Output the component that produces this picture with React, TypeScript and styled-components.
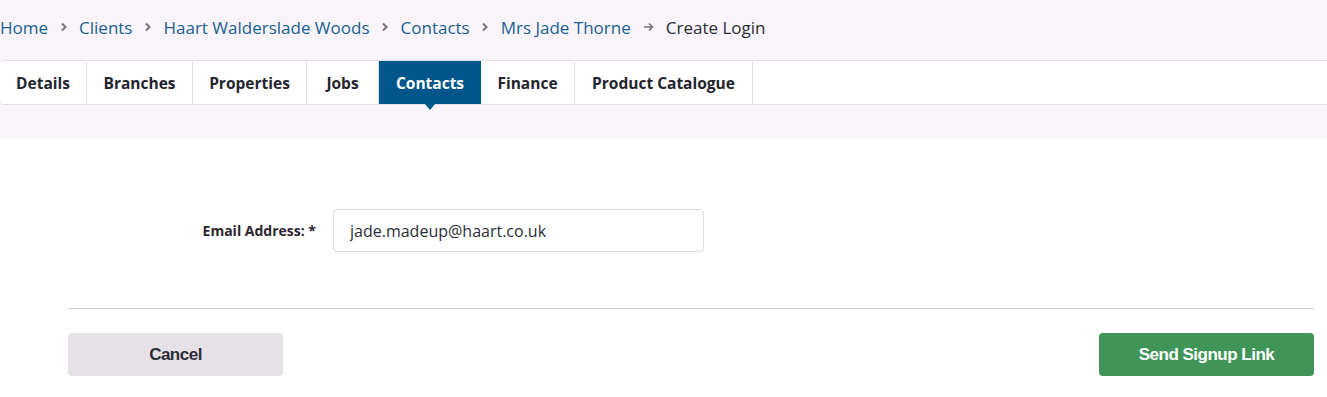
import React from 'react'
import styled, { createGlobalStyle } from 'styled-components'

const GlobalStyle = createGlobalStyle`
  html, body {
    margin: 0;
    padding: 0;
    background: #ffffff;
    font-family: 'Open Sans', 'Noto Sans', sans-serif;
  }
`

const Header = styled.div`
  background-color: #f8f4fa;
  padding-bottom: 34px;
`
const Crumbs = styled.nav`
  display: flex;
  align-items: center;
  height: 54px;
  margin-bottom: 6px;
  font-size: 17px;
`
const Crumb = styled.a<{ $current?: boolean }>`
  color: ${(p) => (p.$current ? '#2c2c36' : '#1b5f93')};
  text-decoration: none;
  white-space: nowrap;
`
const Sep = styled.span<{ $wide?: boolean }>`
  display: inline-flex;
  width: ${(p) => (p.$wide ? 35 : 31)}px;
  justify-content: center;
  color: #7a7a7a;
`
const TabBar = styled.div`
  display: flex;
  height: 43px;
  background: #ffffff;
  border-top: 1px solid #e2dee6;
  border-bottom: 1px solid #e2dee6;
  border-top-left-radius: 4px;
  border-bottom-left-radius: 4px;
`
const Tab = styled.div<{ $active?: boolean; $w: number }>`
  position: relative;
  width: ${(p) => p.$w}px;
  display: flex;
  align-items: center;
  justify-content: center;
  font-weight: 700;
  font-size: 15.5px;
  color: ${(p) => (p.$active ? '#ffffff' : '#24242e')};
  background: ${(p) => (p.$active ? '#00558b' : 'transparent')};
  border-right: ${(p) => (p.$active ? 'none' : '1px solid #e2dee6')};
  box-sizing: border-box;

  ${(p) =>
    p.$active &&
    `
    &::after {
      content: '';
      position: absolute;
      left: 50%;
      bottom: -6px;
      transform: translateX(-50%);
      border-left: 5px solid transparent;
      border-right: 5px solid transparent;
      border-top: 6px solid #00558b;
    }
  `}
`
const Body = styled.div`
  padding: 70px 13px 0 68px;
`
const FieldRow = styled.div`
  display: flex;
  align-items: center;
`
const Label = styled.label`
  width: 265px;
  text-align: right;
  padding-right: 17px;
  box-sizing: border-box;
  font-size: 14px;
  font-weight: 700;
  color: #2c2630;
`
const Input = styled.input`
  width: 371px;
  height: 43px;
  box-sizing: border-box;
  border: 1px solid #dcdcdc;
  border-radius: 4px;
  padding: 0 16px;
  font-family: 'Open Sans', 'Noto Sans', sans-serif;
  font-size: 16px;
  color: #2c2c36;
  outline: none;
`
const Divider = styled.hr`
  margin: 56px 0 24px;
  border: none;
  border-top: 1px solid #cfcfcf;
`
const Actions = styled.div`
  display: flex;
  justify-content: space-between;
`
const Button = styled.button<{ $primary?: boolean }>`
  width: 215px;
  height: 43px;
  border: none;
  border-radius: 4px;
  font-family: 'Liberation Sans Narrow', 'Liberation Sans', Arial, sans-serif;
  font-weight: 700;
  font-size: 17px;
  letter-spacing: -0.5px;
  cursor: pointer;
  color: ${(p) => (p.$primary ? '#ffffff' : '#2c2c36')};
  background: ${(p) => (p.$primary ? '#409458' : '#e6e1e7')};
`

const crumbs = ['Home', 'Clients', 'Haart Walderslade Woods', 'Contacts', 'Mrs Jade Thorne']
const tabs: [string, number][] = [
  ['Details', 87],
  ['Branches', 106],
  ['Properties', 114],
  ['Jobs', 72],
  ['Contacts', 102],
  ['Finance', 94],
  ['Product Catalogue', 178],
]

const Chevron = () => (
  <svg width="8" height="10" viewBox="0 0 8 10">
    <path d="M2 1.5 L5.5 5 L2 8.5" fill="none" stroke="#777" strokeWidth="2" />
  </svg>
)
const Arrow = () => (
  <svg width="11" height="10" viewBox="0 0 11 10">
    <path d="M1 5 H9.5 M6 1.5 L9.5 5 L6 8.5" fill="none" stroke="#777" strokeWidth="1.6" />
  </svg>
)

const App = () => {
  const [email, setEmail] = React.useState('jade.madeup@haart.co.uk')
  return (
    <>
      <GlobalStyle />
      <Header>
        <Crumbs>
          {crumbs.map((c, i) => {
            const last = i === crumbs.length - 1
            return (
              <React.Fragment key={c}>
                <Crumb href="#">{c}</Crumb>
                <Sep $wide={last}>{last ? <Arrow /> : <Chevron />}</Sep>
              </React.Fragment>
            )
          })}
          <Crumb $current>Create Login</Crumb>
        </Crumbs>
        <TabBar>
          {tabs.map(([t, w]) => (
            <Tab key={t} $w={w} $active={t === 'Contacts'}>
              {t}
            </Tab>
          ))}
        </TabBar>
      </Header>
      <Body>
        <FieldRow>
          <Label>Email Address: *</Label>
          <Input value={email} onChange={(e) => setEmail(e.target.value)} />
        </FieldRow>
        <Divider />
        <Actions>
          <Button>Cancel</Button>
          <Button $primary>Send Signup Link</Button>
        </Actions>
      </Body>
    </>
  )
}

export default App
